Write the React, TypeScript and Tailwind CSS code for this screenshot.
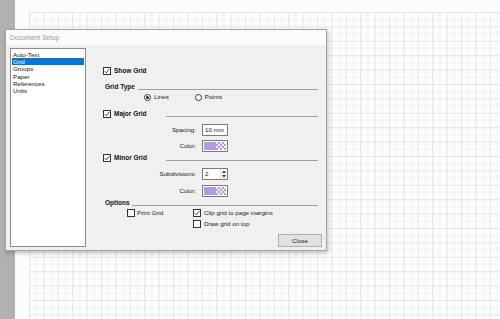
import React from 'react';

const FONT = { fontFamily: '"Liberation Sans", Arial, sans-serif' };

function Check({ checked }: { checked?: boolean }) {
  return (
    <span className="w-[8px] h-[8px] border border-[#333] bg-white flex items-center justify-center shrink-0">
      {checked && (
        <svg width="6" height="6" viewBox="0 0 6 6">
          <path d="M0.6 3.1 L2.3 4.8 L5.4 1" fill="none" stroke="#222" strokeWidth="0.8" />
        </svg>
      )}
    </span>
  );
}

function Radio({ on }: { on?: boolean }) {
  return (
    <span className="w-[7px] h-[7px] rounded-full border border-[#333] bg-white flex items-center justify-center shrink-0">
      {on && <span className="w-[3px] h-[3px] rounded-full bg-[#222]" />}
    </span>
  );
}

function Swatch() {
  return (
    <div className="w-[26px] h-[12px] border border-[#7a7a7a] bg-white p-[1px] flex">
      <div className="flex-1 bg-[#b29be6]" />
      <svg width="10" height="8" viewBox="0 0 10 8" className="block">
        <rect width="10" height="8" fill="#b29be6" />
        {[0, 1, 2, 3].map((r) =>
          [0, 1, 2, 3, 4].map((c) =>
            (r + c) % 2 === 0 ? <rect key={r + '-' + c} x={c * 2} y={r * 2} width="2" height="2" fill="#f4f0fc" /> : null
          )
        )}
      </svg>
    </div>
  );
}

function Section({ label, line, checked }: { label: string; line: number; checked?: boolean }) {
  return (
    <div className="flex items-center h-[10px] w-[215px]">
      {checked !== undefined && <Check checked={checked} />}
      <span className={'font-bold text-[6.5px] text-[#111] ' + (checked !== undefined ? 'ml-[3px]' : 'ml-[2px]')}>{label}</span>
      <div className="flex-1 h-[1px] bg-[#a0a0a0] self-end mb-[2px]" style={{ marginLeft: line }} />
    </div>
  );
}

const items = ['Auto-Text', 'Grid', 'Groups', 'Paper', 'References', 'Units'];

export default function App() {
  return (
    <div className="relative w-[500px] h-[319px] flex overflow-hidden bg-white" style={FONT}>
      <div className="w-[15px] bg-[#b1b1b1]" />
      <div className="flex-1 bg-[#fcfcfc] pl-[14px] pt-[12px] flex">
        <svg className="flex-1 h-full block" preserveAspectRatio="none">
          <defs>
            <pattern id="g" width="14.4" height="14.4" patternUnits="userSpaceOnUse">
              <rect width="14.4" height="14.4" fill="#fcfdfd" />
              <rect x="7.2" width="1" height="14.4" fill="#edf2f4" />
              <rect y="7.2" width="14.4" height="1" fill="#edf2f4" />
              <rect width="1" height="14.4" fill="#dfe7eb" />
              <rect width="14.4" height="1" fill="#dfe7eb" />
            </pattern>
          </defs>
          <rect width="100%" height="100%" fill="url(#g)" />
        </svg>
      </div>

      {/* Dialog */}
      <div className="absolute left-[5px] top-[29px] w-[322px] h-[222px] border border-[#a3a3a3] bg-[#f0f0f0] shadow-[1px_2px_4px_rgba(0,0,0,0.25)] flex flex-col">
        <div className="h-[17px] bg-[#fbfbfb] flex items-center pl-[4px] text-[6.6px] text-[#9a9a9a]">Document Setup</div>
        <div className="flex-1 flex px-[4px] pt-[3px] pb-[3px]">
          <div className="w-[76px] border border-[#8c8c8c] bg-white pt-[2px] px-[1px] text-[6.2px] text-[#111]">
            {items.map((it) => (
              <div key={it} className={'h-[7.2px] leading-[7.2px] pl-[1px] ' + (it === 'Grid' ? 'bg-[#0078d7] text-white' : '')}>
                {it}
              </div>
            ))}
          </div>

          <div className="ml-[17px] flex flex-col text-[6.2px] text-[#1a1a1a]">
            <div className="mt-[18px] flex items-center h-[10px]">
              <Check checked />
              <span className="ml-[3px] font-bold text-[6.5px] text-[#111]">Show Grid</span>
            </div>

            <div className="mt-[6px]">
              <Section label="Grid Type" line={3} />
            </div>
            <div className="flex items-center h-[10px] pl-[41px]">
              <Radio on />
              <span className="ml-[3px]">Lines</span>
              <span className="ml-[26px]"><Radio /></span>
              <span className="ml-[3px]">Points</span>
            </div>

            <div className="mt-[7px]">
              <Section label="Major Grid" line={19} checked />
            </div>
            <div className="mt-[5px] flex items-center h-[12px]">
              <span className="w-[93px] text-right">Spacing:</span>
              <div className="ml-[6px] w-[26px] h-[12px] border border-[#7a7a7a] bg-white flex items-center pl-[2px]">10 mm</div>
            </div>
            <div className="mt-[4px] flex items-center h-[12px]">
              <span className="w-[93px] text-right">Color:</span>
              <div className="ml-[6px]"><Swatch /></div>
            </div>

            <div className="mt-[1px]">
              <Section label="Minor Grid" line={19} checked />
            </div>
            <div className="mt-[5px] flex items-center h-[12px]">
              <span className="w-[93px] text-right">Subdivisions:</span>
              <div className="ml-[6px] w-[26px] h-[12px] border border-[#7a7a7a] bg-white flex">
                <span className="flex-1 pl-[2px] leading-[10px]">2</span>
                <div className="w-[7px] flex flex-col border-l border-[#ddd]">
                  <div className="flex-1 flex items-center justify-center bg-[#f4f4f4]">
                    <svg width="4" height="3" viewBox="0 0 4 3"><path d="M0 3 L2 0.5 L4 3Z" fill="#333" /></svg>
                  </div>
                  <div className="flex-1 flex items-center justify-center bg-[#f4f4f4]">
                    <svg width="4" height="3" viewBox="0 0 4 3"><path d="M0 0 L2 2.5 L4 0Z" fill="#333" /></svg>
                  </div>
                </div>
              </div>
            </div>
            <div className="mt-[5px] flex items-center h-[12px]">
              <span className="w-[93px] text-right">Color:</span>
              <div className="ml-[6px]"><Swatch /></div>
            </div>

            <div className="mt-[1px]">
              <Section label="Options" line={2} />
            </div>
            <div className="flex items-center h-[10px]">
              <span className="ml-[24px]"><Check /></span>
              <span className="ml-[2px] w-[56px]">Print Grid</span>
              <Check checked />
              <span className="ml-[3px]">Clip grid to page margins</span>
            </div>
            <div className="mt-[1px] flex items-center h-[10px]">
              <span className="ml-[90px]"><Check /></span>
              <span className="ml-[3px]">Draw grid on top</span>
            </div>

            <div className="mt-[5px] flex justify-end w-[219px]">
              <div className="w-[44px] h-[13px] border border-[#adadad] bg-[#e1e1e1] flex items-center justify-center">Close</div>
            </div>
          </div>
        </div>
      </div>
    </div>
  );
}
